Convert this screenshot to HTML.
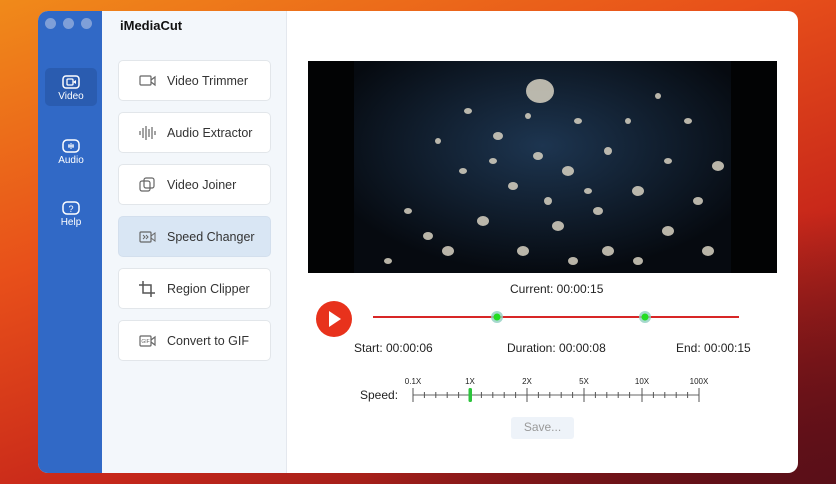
<!DOCTYPE html>
<html><head><meta charset="utf-8"><style>
*{margin:0;padding:0;box-sizing:border-box}
body{width:836px;height:484px;overflow:hidden;position:relative;font-family:"Liberation Sans",sans-serif;
background:radial-gradient(ellipse at 100% 100%,#5a0f18 0%,transparent 40%),linear-gradient(160deg,#f08a1a 0%,#e8501a 35%,#c8281a 65%,#6a1018 100%);}
.win{position:absolute;left:38px;top:11px;width:760px;height:462px;border-radius:10px;overflow:hidden;background:#fff}
.side{position:absolute;left:0;top:0;width:64px;height:100%;background:#3169c6}
.dot{position:absolute;top:7px;width:11px;height:11px;border-radius:50%;background:#7f9fd8}
.nav{position:absolute;left:7px;width:52px;height:38px;border-radius:5px;color:#fff;font-size:10px;text-align:center;line-height:11px}
.nav svg{display:block;margin:6px auto 1px}
.mid{position:absolute;left:64px;top:0;width:185px;height:100%;background:#f3f7fb;border-right:1px solid #e4e8ee}
.title{position:absolute;left:82px;top:7px;font-size:13px;font-weight:bold;color:#111}
.card{position:absolute;left:16px;width:153px;height:41px;background:#fff;border:1px solid #e2e6ea;border-radius:5px;font-size:12.5px;color:#333;line-height:40px;padding-left:48px}
.card svg{position:absolute;left:19px;top:12px}
.card.act{background:#d9e6f4;border-color:#d3dfed}
.t{position:absolute;font-size:12px;color:#222}
</style></head><body>
<div class="win">
 <div class="side">
  <div class="dot" style="left:7px"></div><div class="dot" style="left:25px"></div><div class="dot" style="left:43px"></div>
  <div class="nav" style="top:57px;background:#2a5cb0"><svg width="18" height="16" viewBox="0 0 18 16"><rect x="1" y="2" width="16" height="12" rx="3" fill="none" stroke="#fff" stroke-width="1.5"/><rect x="5" y="5" width="6" height="6" rx="1" fill="none" stroke="#fff" stroke-width="1.3"/><path d="M11 8l3-2v4z" fill="#fff"/></svg>Video</div>
  <div class="nav" style="top:121px"><svg width="18" height="16" viewBox="0 0 18 16"><rect x="1" y="2" width="16" height="12" rx="4" fill="none" stroke="#fff" stroke-width="1.5"/><path d="M6 8h6M7 6v4M9 5v6M11 6v4" stroke="#fff" stroke-width="1"/></svg>Audio</div>
  <div class="nav" style="top:183px"><svg width="18" height="16" viewBox="0 0 18 16"><rect x="1" y="2" width="16" height="12" rx="4" fill="none" stroke="#fff" stroke-width="1.5"/><text x="9" y="12" font-size="9" fill="#fff" text-anchor="middle" font-family="Liberation Sans">?</text></svg>Help</div>
 </div>
 <div class="mid">
  <div class="card" style="top:49px"><svg width="20" height="16" viewBox="0 0 20 16"><rect x="2" y="3" width="11" height="9" rx="1" fill="none" stroke="#666" stroke-width="1.2"/><path d="M13 7l4-3v8l-4-3" fill="none" stroke="#666" stroke-width="1.2"/></svg>Video Trimmer</div>
  <div class="card" style="top:101px"><svg width="20" height="16" viewBox="0 0 20 16"><path d="M2 6v4M5 3v10M8 1v14M11 4v8M14 2v12M17 6v4" stroke="#666" stroke-width="1.2"/></svg>Audio Extractor</div>
  <div class="card" style="top:153px"><svg width="20" height="16" viewBox="0 0 20 16"><rect x="2" y="4" width="10" height="10" rx="2" fill="none" stroke="#666" stroke-width="1.2"/><rect x="6" y="1" width="10" height="10" rx="2" fill="none" stroke="#666" stroke-width="1.2"/></svg>Video Joiner</div>
  <div class="card act" style="top:205px"><svg width="20" height="16" viewBox="0 0 20 16"><rect x="2" y="3" width="11" height="10" rx="1" fill="none" stroke="#666" stroke-width="1.2"/><path d="M13 7l4-3v8l-4-3M5 6l2 2-2 2M8 6l2 2-2 2" fill="none" stroke="#666" stroke-width="1"/></svg>Speed Changer</div>
  <div class="card" style="top:257px"><svg width="20" height="16" viewBox="0 0 20 16"><path d="M5 0v12h12M1 4h12v12" fill="none" stroke="#555" stroke-width="1.5"/></svg>Region Clipper</div>
  <div class="card" style="top:309px"><svg width="20" height="16" viewBox="0 0 20 16"><rect x="2" y="3" width="11" height="10" rx="1" fill="none" stroke="#666" stroke-width="1.2"/><path d="M13 7l4-3v8l-4-3" fill="none" stroke="#666" stroke-width="1.2"/><text x="7.5" y="10" font-size="5" fill="#666" text-anchor="middle" font-family="Liberation Sans">GIF</text></svg>Convert to GIF</div>
 </div>
 <div class="title">iMediaCut</div>
</div>
<svg style="position:absolute;left:308px;top:61px" width="469" height="212">
 <rect width="469" height="212" fill="#020304"/>
 <rect x="46" width="377" height="212" fill="#0b1420"/>
 <radialGradient id="g" cx="50%" cy="40%" r="60%"><stop offset="0" stop-color="#1d3550"/><stop offset="1" stop-color="#060a10"/></radialGradient>
 <rect x="46" width="377" height="212" fill="url(#g)"/>
 <g fill="#d8d2c2" opacity=".85">
  <ellipse cx="232" cy="30" rx="14" ry="12"/><ellipse cx="160" cy="50" rx="4" ry="3"/><ellipse cx="190" cy="75" rx="5" ry="4"/><ellipse cx="230" cy="95" rx="5" ry="4"/><ellipse cx="260" cy="110" rx="6" ry="5"/><ellipse cx="205" cy="125" rx="5" ry="4"/><ellipse cx="300" cy="90" rx="4" ry="4"/><ellipse cx="330" cy="130" rx="6" ry="5"/><ellipse cx="290" cy="150" rx="5" ry="4"/><ellipse cx="250" cy="165" rx="6" ry="5"/><ellipse cx="175" cy="160" rx="6" ry="5"/><ellipse cx="140" cy="190" rx="6" ry="5"/><ellipse cx="120" cy="175" rx="5" ry="4"/><ellipse cx="100" cy="150" rx="4" ry="3"/><ellipse cx="360" cy="170" rx="6" ry="5"/><ellipse cx="390" cy="140" rx="5" ry="4"/><ellipse cx="410" cy="105" rx="6" ry="5"/><ellipse cx="380" cy="60" rx="4" ry="3"/><ellipse cx="350" cy="35" rx="3" ry="3"/><ellipse cx="300" cy="190" rx="6" ry="5"/><ellipse cx="215" cy="190" rx="6" ry="5"/><ellipse cx="265" cy="200" rx="5" ry="4"/><ellipse cx="330" cy="200" rx="5" ry="4"/><ellipse cx="155" cy="110" rx="4" ry="3"/><ellipse cx="130" cy="80" rx="3" ry="3"/><ellipse cx="270" cy="60" rx="4" ry="3"/><ellipse cx="320" cy="60" rx="3" ry="3"/><ellipse cx="240" cy="140" rx="4" ry="4"/><ellipse cx="185" cy="100" rx="4" ry="3"/><ellipse cx="400" cy="190" rx="6" ry="5"/><ellipse cx="80" cy="200" rx="4" ry="3"/><ellipse cx="360" cy="100" rx="4" ry="3"/><ellipse cx="280" cy="130" rx="4" ry="3"/><ellipse cx="220" cy="55" rx="3" ry="3"/>
 </g>
</svg>
<div class="t" style="left:510px;top:282px">Current: 00:00:15</div>
<svg style="position:absolute;left:315px;top:300px" width="430" height="40">
 <circle cx="19" cy="19" r="18" fill="#e8321c"/><path d="M14 11l12 8-12 8z" fill="#fff"/>
 <line x1="58" y1="17" x2="424" y2="17" stroke="#d82626" stroke-width="2"/>
 <circle cx="182" cy="17" r="6" fill="#8fd0c0" opacity=".8"/><circle cx="182" cy="17" r="3.5" fill="#22dd22"/>
 <circle cx="330" cy="17" r="6" fill="#8fd0c0" opacity=".8"/><circle cx="330" cy="17" r="3.5" fill="#22dd22"/>
</svg>
<div class="t" style="left:354px;top:341px">Start: 00:00:06</div>
<div class="t" style="left:507px;top:341px">Duration: 00:00:08</div>
<div class="t" style="left:676px;top:341px">End: 00:00:15</div>
<div class="t" style="left:360px;top:388px">Speed:</div>
<svg style="position:absolute;left:400px;top:374px" width="320" height="32" font-family="Liberation Sans" font-size="8" fill="#222">
 <text x="13" y="10" text-anchor="middle">0.1X</text><text x="70" y="10" text-anchor="middle">1X</text><text x="127" y="10" text-anchor="middle">2X</text><text x="184" y="10" text-anchor="middle">5X</text><text x="242" y="10" text-anchor="middle">10X</text><text x="299" y="10" text-anchor="middle">100X</text>
 <line x1="13" y1="21" x2="299" y2="21" stroke="#666" stroke-width="1"/>
 <g stroke="#555" stroke-width="1">
  <path d="M13 14v14M70 14v14M127 14v14M184 14v14M242 14v14M299 14v14"/>
  <path d="M24.4 18v6M35.8 18v6M47.2 18v6M58.6 18v6M81.4 18v6M92.8 18v6M104.2 18v6M115.6 18v6M138.4 18v6M149.8 18v6M161.2 18v6M172.6 18v6M195.4 18v6M206.8 18v6M218.2 18v6M229.6 18v6M253.4 18v6M264.8 18v6M276.2 18v6M287.6 18v6"/>
 </g>
 <rect x="68.5" y="14" width="3.5" height="14" rx="1.5" fill="#2cc43c"/>
</svg>
<div style="position:absolute;left:511px;top:417px;width:63px;height:22px;background:#eef3f9;border-radius:3px;color:#999;font-size:12px;text-align:center;line-height:21px">Save...</div>
</body></html>
